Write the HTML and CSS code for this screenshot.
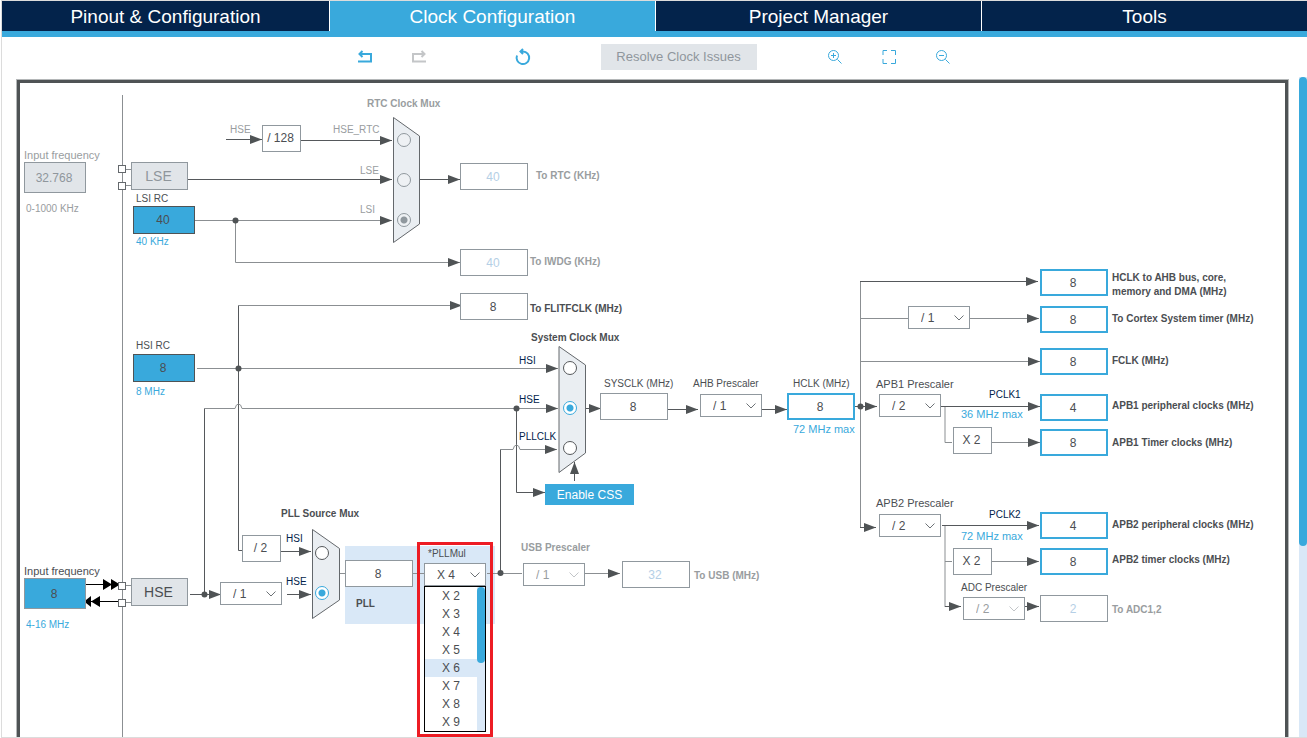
FILE: index.html
```
<!DOCTYPE html>
<html lang="en">
<head>
<meta charset="utf-8">
<title>Clock Configuration</title>
<link rel="stylesheet" href="styles.css">
</head>
<body>
<svg class="defs" aria-hidden="true">
  <symbol id="chevron" viewBox="0 0 10 6"><path d="M.5 .5 5 5 9.5 .5"/></symbol>
</svg>
<div class="app">
  <nav class="tabs" aria-label="Views">
    <a class="tab" href="#pinout">Pinout &amp; Configuration</a>
    <a class="tab tab-active" href="#clock" aria-current="page">Clock Configuration</a>
    <a class="tab" href="#project">Project Manager</a>
    <a class="tab" href="#tools">Tools</a>
  </nav>

  <div class="toolbar">
    <div class="tool-group">
      <button class="tool" type="button" aria-label="Undo"><svg viewBox="0 0 20 20"><path class="bold" d="M4.500 7H16V14M3 14.500H17M7.500 4 4.500 7 7.500 10"/></svg></button>
      <button class="tool tool-off" type="button" aria-label="Redo" disabled><svg viewBox="0 0 20 20"><path class="bold" d="M15.500 7H4V14M3 14.500H17M12.500 4 15.500 7 12.500 10"/></svg></button>
    </div>
    <button class="tool" type="button" aria-label="Reset"><svg viewBox="0 0 20 20"><path class="bold" d="M4 8.500A6.300 6.300 0 1 0 10 4.500H8M10 2 7.500 4.500 10 7"/></svg></button>
    <button class="resolve" type="button" disabled>Resolve Clock Issues</button>
    <div class="tool-group">
      <button class="tool" type="button" aria-label="Zoom in"><svg viewBox="0 0 20 20"><path d="M12.500 12.500 16.500 16.500M6 8.500H11M8.500 6V11"/><circle cx="8.500" cy="8.500" r="5"/></svg></button>
      <button class="tool" type="button" aria-label="Fit"><svg viewBox="0 0 20 20"><path d="M4 8V3.500H8M12 3.500H16.500V8M16.500 12V16.500H12M8 16.500H4V12"/></svg></button>
      <button class="tool" type="button" aria-label="Zoom out"><svg viewBox="0 0 20 20"><path d="M12.500 12.500 16.500 16.500M6 8.500H11"/><circle cx="8.500" cy="8.500" r="5"/></svg></button>
    </div>
  </div>

  <main class="workspace">
    <div class="board">
      <div class="diagram">
        <div class="pll-panel"></div>
        <svg class="wires" width="1265" height="655" viewBox="20 83 1265 655" aria-hidden="true">
          <defs>
            <marker id="arrow" markerUnits="userSpaceOnUse" markerWidth="12" markerHeight="9" refX="12" refY="4.500" orient="auto"><path class="head" d="M0 0 12 4.500 0 9Z"/></marker>
          </defs>
          <g class="wire soft">
            <path d="M122.500 95V738M125 169.500H131M125 185.500H131M125 585.500H131M125 602.500H131"/>
            <path d="M860.500 281V527M945 406V442.500H952M945 525V607M945 561.500H952M860 318.500H908"/>
            <path d="M339 573.500H345M413 573.500H424M487 573.500H522"/>
          </g>
          <g class="wire">
            <path marker-end="url(#arrow)" d="M226 139.500H262"/>
            <path marker-end="url(#arrow)" d="M301 140.500H392"/>
            <path marker-end="url(#arrow)" d="M188 179.500H392"/>
            <path marker-end="url(#arrow)" d="M419 179.500H460"/>
            <path marker-end="url(#arrow)" d="M860 281.500H1038"/>
            <path marker-end="url(#arrow)" d="M941 406.500H1040"/>
            <path marker-end="url(#arrow)" d="M942 525.500H1039"/>
            <path marker-end="url(#arrow)" d="M585 408.500H601"/>
            <path marker-end="url(#arrow)" d="M574.500 481V462"/>
            <path marker-end="url(#arrow)" d="M668 409.500H698"/>
            <path marker-end="url(#arrow)" d="M762 409.500H787"/>
            <path marker-end="url(#arrow)" d="M855 406.500H877"/>
            <path marker-end="url(#arrow)" d="M860 527.500H876"/>
            <path marker-end="url(#arrow)" d="M516.500 408V492.500H545"/>
            <path marker-end="url(#arrow)" d="M281 551.500H311"/>
            <path marker-end="url(#arrow)" d="M287 594.500H311"/>
            <path marker-end="url(#arrow)" d="M190 594.500H221"/>
            <path marker-end="url(#arrow)" d="M1025 606.500H1039"/>
            <path marker-end="url(#arrow)" d="M945 606.500H961"/>
            <path d="M238.500 305V550.500H242M204.500 594V408M500.500 573V449"/>
          </g>
          <g class="wire soft">
            <path marker-end="url(#arrow)" d="M195 220.500H392"/>
            <path marker-end="url(#arrow)" d="M235.500 220V262.500H460"/>
            <path marker-end="url(#arrow)" d="M238 305.500H462"/>
            <path marker-end="url(#arrow)" d="M197 368.500H558"/>
            <path marker-end="url(#arrow)" d="M204 408.500H235Q236 404 238.500 404T242 408.500H558"/>
            <path marker-end="url(#arrow)" d="M500 449.500H513Q514 445 516.500 445T520 449.500H557"/>
            <path marker-end="url(#arrow)" d="M970 318.500H1039"/>
            <path marker-end="url(#arrow)" d="M860 361.500H1040"/>
            <path marker-end="url(#arrow)" d="M992 442.500H1040"/>
            <path marker-end="url(#arrow)" d="M992 561.500H1039"/>
            <path marker-end="url(#arrow)" d="M585 573.500H620"/>
          </g>
          <g class="mux">
            <path d="M393.500 117.500 419.500 136V224L393.500 242.500Z"/>
            <path d="M559 346.500 585.500 365V453L559 472.500Z"/>
            <path d="M312.500 529.500 339.500 548.500V600L312.500 618.500Z"/>
          </g>
          <g class="dot">
            <circle cx="235.500" cy="220.500" r="3"/><circle cx="238.500" cy="368.500" r="3"/><circle cx="516.500" cy="408.500" r="3"/>
            <circle cx="500.500" cy="573" r="3"/><circle cx="860.500" cy="406.500" r="3"/><circle cx="204.500" cy="594.500" r="3"/>
          </g>
          <g class="osc">
            <path d="M86 584.500H119M122 601.500H86"/>
            <path class="osc-head" d="M103 579 112 584.500 103 590ZM111 579 120 584.500 111 590ZM91 596V607L86 603V600ZM100 596 91 601.500 100 607Z"/>
          </g>
          <g class="pin">
            <rect x="118.500" y="165.500" width="7" height="7"/><rect x="118.500" y="182.500" width="7" height="7"/>
            <rect x="118.500" y="582.500" width="7" height="7"/><rect x="118.500" y="599.500" width="7" height="7"/>
          </g>
        </svg>

        <!-- Oscillators -->
        <label class="label wide muted p-lse-freq-label" for="lse-freq">Input frequency</label>
        <input class="field freq off p-lse-freq" id="lse-freq" value="32.768" disabled>
        <span class="label muted p-lse-range">0-1000 KHz</span>
        <button class="osc-button off p-lse" type="button" disabled>LSE</button>
        <label class="label p-lsi-label" for="lsi">LSI RC</label>
        <input class="field source p-lsi" id="lsi" value="40" readonly>
        <span class="label blue p-lsi-unit">40 KHz</span>
        <label class="label p-hsi-label" for="hsi">HSI RC</label>
        <input class="field source p-hsi" id="hsi" value="8" readonly>
        <span class="label blue p-hsi-unit">8 MHz</span>
        <label class="label wide p-hse-freq-label" for="hse-freq">Input frequency</label>
        <input class="field freq p-hse-freq" id="hse-freq" value="8">
        <span class="label blue p-hse-range">4-16 MHz</span>
        <button class="osc-button p-hse" type="button">HSE</button>

        <!-- RTC -->
        <span class="label strong muted p-rtc-title">RTC Clock Mux</span>
        <span class="label muted p-rtc-hse">HSE</span>
        <span class="const p-div128">/ 128</span>
        <label class="label muted p-rtc-in1" for="rtc1">HSE_RTC</label>
        <label class="label muted p-rtc-in2" for="rtc2">LSE</label>
        <label class="label muted p-rtc-in3" for="rtc3">LSI</label>
        <input class="radio p-rtc1" type="radio" name="rtc" id="rtc1" disabled>
        <input class="radio p-rtc2" type="radio" name="rtc" id="rtc2" disabled>
        <input class="radio p-rtc3" type="radio" name="rtc" id="rtc3" checked disabled>
        <input class="field idle p-rtc" id="rtc-out" value="40" disabled>
        <label class="label strong muted p-rtc-label" for="rtc-out">To RTC (KHz)</label>
        <input class="field idle p-iwdg" id="iwdg" value="40" disabled>
        <label class="label strong muted p-iwdg-label" for="iwdg">To IWDG (KHz)</label>
        <input class="field p-flitf" id="flitf" value="8" readonly>
        <label class="label strong p-flitf-label" for="flitf">To FLITFCLK (MHz)</label>

        <!-- System clock -->
        <span class="label strong p-sys-title">System Clock Mux</span>
        <label class="label navy p-sys-in1" for="sys1">HSI</label>
        <label class="label navy p-sys-in2" for="sys2">HSE</label>
        <label class="label navy p-sys-in3" for="sys3">PLLCLK</label>
        <input class="radio p-sys1" type="radio" name="sys" id="sys1">
        <input class="radio p-sys2" type="radio" name="sys" id="sys2" checked>
        <input class="radio p-sys3" type="radio" name="sys" id="sys3">
        <button class="css-button" type="button">Enable CSS</button>
        <label class="label p-sysclk-label" for="sysclk">SYSCLK (MHz)</label>
        <input class="field p-sysclk" id="sysclk" value="8" readonly>
        <label class="label p-ahb-label" for="ahb">AHB Prescaler</label>
        <div class="select p-ahb"><select id="ahb"><option>/ 1</option><option>/ 2</option></select><svg><use href="#chevron"/></svg></div>
        <label class="label p-hclk-label" for="hclk">HCLK (MHz)</label>
        <input class="field key p-hclk" id="hclk" value="8">
        <span class="label wide blue p-hclk-max">72 MHz max</span>

        <!-- AHB outputs -->
        <input class="field key p-out1" id="out1" value="8" readonly>
        <label class="label strong two-line p-out1-label" for="out1">HCLK to AHB bus, core,<br>memory and DMA (MHz)</label>
        <div class="select p-cortex"><select aria-label="Cortex prescaler"><option>/ 1</option><option>/ 8</option></select><svg><use href="#chevron"/></svg></div>
        <input class="field key p-out2" id="out2" value="8" readonly>
        <label class="label strong p-out2-label" for="out2">To Cortex System timer (MHz)</label>
        <input class="field key p-out3" id="out3" value="8" readonly>
        <label class="label strong p-out3-label" for="out3">FCLK (MHz)</label>

        <!-- APB1 -->
        <label class="label wide p-apb1-label" for="apb1">APB1 Prescaler</label>
        <div class="select p-apb1"><select id="apb1"><option>/ 2</option><option>/ 4</option></select><svg><use href="#chevron"/></svg></div>
        <span class="label navy p-pclk1">PCLK1</span>
        <span class="label wide blue p-pclk1-max">36 MHz max</span>
        <span class="const p-mul1">X 2</span>
        <input class="field key p-out4" id="out4" value="4" readonly>
        <label class="label strong p-out4-label" for="out4">APB1 peripheral clocks (MHz)</label>
        <input class="field key p-out5" id="out5" value="8" readonly>
        <label class="label strong p-out5-label" for="out5">APB1 Timer clocks (MHz)</label>

        <!-- APB2 -->
        <label class="label wide p-apb2-label" for="apb2">APB2 Prescaler</label>
        <div class="select p-apb2"><select id="apb2"><option>/ 2</option><option>/ 4</option></select><svg><use href="#chevron"/></svg></div>
        <span class="label navy p-pclk2">PCLK2</span>
        <span class="label wide blue p-pclk2-max">72 MHz max</span>
        <span class="const p-mul2">X 2</span>
        <input class="field key p-out6" id="out6" value="4" readonly>
        <label class="label strong p-out6-label" for="out6">APB2 peripheral clocks (MHz)</label>
        <input class="field key p-out7" id="out7" value="8" readonly>
        <label class="label strong p-out7-label" for="out7">APB2 timer clocks (MHz)</label>
        <label class="label p-adc-label" for="adc">ADC Prescaler</label>
        <div class="select select-off p-adc"><select id="adc" disabled><option>/ 2</option></select><svg><use href="#chevron"/></svg></div>
        <input class="field idle p-out8" id="out8" value="2" disabled>
        <label class="label strong muted p-out8-label" for="out8">To ADC1,2</label>

        <!-- PLL -->
        <span class="label strong p-pll-title">PLL Source Mux</span>
        <span class="const p-div2">/ 2</span>
        <div class="select p-prediv"><select aria-label="HSE divider"><option>/ 1</option><option>/ 2</option></select><svg><use href="#chevron"/></svg></div>
        <label class="label navy p-pll-in1" for="pll1">HSI</label>
        <label class="label navy p-pll-in2" for="pll2">HSE</label>
        <input class="radio p-pll1" type="radio" name="pll" id="pll1">
        <input class="radio p-pll2" type="radio" name="pll" id="pll2" checked>
        <input class="field p-pll" id="pll" value="8" readonly>
        <label class="label strong p-pll-label" for="pll">PLL</label>
        <label class="label p-mul-label" for="mul">*PLLMul</label>
        <div class="select p-mul"><select id="mul"><option>X 4</option></select><svg><use href="#chevron"/></svg></div>
        <div class="menu">
          <ul class="menu-list" role="listbox" aria-label="PLLMul values">
            <li role="option">X 2</li>
            <li role="option">X 3</li>
            <li role="option" aria-selected="true">X 4</li>
            <li role="option">X 5</li>
            <li class="hover" role="option">X 6</li>
            <li role="option">X 7</li>
            <li role="option">X 8</li>
            <li role="option">X 9</li>
          </ul>
          <div class="track"><div class="menu-thumb"></div></div>
        </div>
        <div class="highlight"></div>

        <!-- USB -->
        <label class="label strong muted p-usb-title" for="usb-div">USB Prescaler</label>
        <div class="select select-off p-usb-div"><select id="usb-div" disabled><option>/ 1</option></select><svg><use href="#chevron"/></svg></div>
        <input class="field idle p-usb" id="usb" value="32" disabled>
        <label class="label strong muted p-usb-label" for="usb">To USB (MHz)</label>
      </div>
    </div>
    <div class="track page-track"><div class="page-thumb"></div></div>
  </main>
</div>
</body>
</html>
```
FILE: styles.css
```
:root {
  --blue: #39a9dc;
  --navy: #03234b;
  --ink: #4b4e52;
  --line: #55585b;
  --edge: #90989e;
  --muted: #999da0;
  --pale: #d9e8f7;
  --off: #e1e5e9;
}

* { box-sizing: border-box; }

body {
  margin: 0;
  background: #fff;
  color: var(--ink);
  font: 12px/16px "Liberation Sans", Arial, sans-serif;
}

input, select, button { margin: 0; font: inherit; color: inherit; }

.defs { position: absolute; width: 0; height: 0; }

.app {
  display: flex;
  flex-direction: column;
  height: 100vh;
  margin-left: 1px;
  border: 1px solid #dcdcdc;
  border-right: 0;
  overflow: hidden;
}

/* Tabs */
.tabs {
  display: grid;
  grid-template-columns: 327fr 325fr 325fr 325fr;
  column-gap: 1px;
  border-bottom: 6px solid var(--blue);
  flex: none;
}
.tab {
  height: 30px;
  background: var(--navy);
  color: #fff;
  font-size: 19px;
  line-height: 32px;
  text-align: center;
  text-decoration: none;
}
.tab-active { background: var(--blue); }

/* Toolbar */
.toolbar {
  display: flex;
  flex: none;
  justify-content: center;
  align-items: center;
  gap: 68px;
  height: 40px;
  padding-right: 2px;
}
.tool-group { display: flex; gap: 34px; }
.tool-group:first-child { margin-right: 16px; }
.tool {
  width: 20px;
  height: 20px;
  padding: 0;
  border: 0;
  background: none;
  color: var(--blue);
}
.tool-off { color: #c4c6c8; }
.tool svg { display: block; width: 20px; height: 20px; fill: none; stroke: currentColor; stroke-width: 1; }
.tool .bold { stroke-width: 2; }
.resolve {
  width: 156px;
  height: 26px;
  padding: 0;
  border: 0;
  background: var(--off);
  color: #8f969c;
  font-size: 13px;
}

/* Workspace */
.workspace { display: flex; flex: 1; min-height: 0; }
.board {
  flex: 1;
  min-width: 0;
  margin: 3px 11px 0 15px;
  border: 3px solid #4f5355;
  border-bottom: 0;
  box-shadow: 0 0 0 1px #b4b7b8;
  overflow: auto;
  scrollbar-width: none;
}
.diagram { position: relative; min-width: 1260px; min-height: 655px; }
.track { flex: none; width: 8px; background: var(--pale); }
.page-thumb { height: 71%; border-radius: 4px; background: var(--blue); }

/* Wires */
.wires { display: block; position: absolute; left: 0; top: 0; }
.wire { fill: none; stroke: var(--line); }
.wire.soft { stroke: #8b8f92; }
.head, .dot { fill: #4f5355; stroke: none; }
.mux { fill: #eaeef2; stroke: #64686c; }
.osc { fill: none; stroke: #000; }
.osc-head { fill: #000; stroke: none; }
.pin { fill: #fff; stroke: #64686c; }

/* Diagram nodes */
.label, .field, .select, .const, .radio, .osc-button, .css-button, .pll-panel, .menu, .highlight { position: absolute; }

.label { font-size: 10px; line-height: 12px; white-space: nowrap; }
.wide { font-size: 11px; }
.strong { font-weight: bold; }
.muted { color: var(--muted); }
.blue { color: var(--blue); }
.navy { color: var(--navy); }
.two-line { line-height: 14px; }

.field {
  width: 68px;
  height: 27px;
  padding: 0 2px 0 0;
  border: 1px solid var(--edge);
  border-radius: 0;
  background: #fff;
  text-align: center;
}
.key { border: 2px solid var(--blue); }
.idle { color: #b5cfe6; }
.source { width: 62px; height: 28px; border-color: #4f5355; background: var(--blue); }
.freq { width: 62px; height: 31px; background: var(--blue); }
.off { background: var(--off); color: #8f969c; }

.const {
  width: 39px;
  height: 27px;
  padding-right: 2px;
  border: 1px solid var(--edge);
  background: #fff;
  line-height: 25px;
  text-align: center;
}

.select { width: 62px; height: 23px; background: #fff; }
.select select {
  width: 100%;
  height: 100%;
  padding: 0 0 0 12px;
  border: 1px solid var(--edge);
  border-radius: 0;
  background: none;
  appearance: none;
}
.select svg {
  position: absolute;
  right: 6px;
  top: 9px;
  width: 10px;
  height: 6px;
  fill: none;
  stroke: #6d7276;
  pointer-events: none;
}
.select-off select { color: #999da0; opacity: 1; }
.select-off svg { stroke: #c2c5c8; }

.osc-button {
  width: 57px;
  height: 28px;
  padding: 0 2px 0 0;
  border: 1px solid var(--edge);
  background: var(--off);
  font-size: 14px;
}
.osc-button.off { color: #8f969c; }

.css-button {
  left: 525px;
  top: 401px;
  width: 89px;
  height: 21px;
  padding: 0;
  border: 0;
  background: var(--blue);
  color: #fff;
}

.radio {
  width: 14px;
  height: 14px;
  border: 1px solid var(--line);
  border-radius: 50%;
  background: #fff;
  appearance: none;
}
.radio:checked {
  border-color: var(--blue);
  background: radial-gradient(circle, var(--blue) 3px, #fff 4px);
}
.radio:disabled { border-color: var(--edge); background: #eef1f4; }
.radio:disabled:checked { background: radial-gradient(circle, var(--edge) 3px, #eef1f4 4px); }

.pll-panel { left: 325px; top: 463px; width: 150px; height: 78px; background: var(--pale); }
.highlight { left: 397px; top: 459px; width: 76px; height: 195px; border: 3px solid #ed1c24; pointer-events: none; }

.menu {
  display: flex;
  left: 404px;
  top: 503px;
  width: 62px;
  height: 146px;
  border: 1px solid #000;
  background: #fff;
}
.menu-list { flex: 1; margin: 0; padding: 0; list-style: none; text-align: center; line-height: 18px; }
.hover { background: var(--pale); }
.menu-thumb { height: 76px; border-radius: 4px; background: var(--blue); }

/* Node positions */
.p-lse-freq-label { left: 4px; top: 66px; }
.p-lse-freq { left: 4px; top: 79px; }
.p-lse-range { left: 6px; top: 120px; }
.p-lse { left: 111px; top: 79px; }
.p-lsi-label { left: 116px; top: 110px; }
.p-lsi { left: 113px; top: 123px; }
.p-lsi-unit { left: 116px; top: 153px; }
.p-hsi-label { left: 116px; top: 257px; }
.p-hsi { left: 113px; top: 271px; }
.p-hsi-unit { left: 116px; top: 303px; }
.p-hse-freq-label { left: 4px; top: 482px; }
.p-hse-freq { left: 4px; top: 495px; }
.p-hse-range { left: 6px; top: 536px; }
.p-hse { left: 111px; top: 495px; }

.p-rtc-title { left: 347px; top: 15px; }
.p-rtc-hse { left: 210px; top: 41px; }
.p-div128 { left: 242px; top: 42px; }
.p-rtc-in1 { left: 313px; top: 41px; }
.p-rtc-in2 { left: 340px; top: 82px; }
.p-rtc-in3 { left: 340px; top: 121px; }
.p-rtc1 { left: 377px; top: 50px; }
.p-rtc2 { left: 377px; top: 90px; }
.p-rtc3 { left: 377px; top: 130px; }
.p-rtc { left: 440px; top: 80px; }
.p-rtc-label { left: 516px; top: 87px; }
.p-iwdg { left: 440px; top: 166px; }
.p-iwdg-label { left: 510px; top: 173px; }
.p-flitf { left: 440px; top: 210px; }
.p-flitf-label { left: 510px; top: 220px; }

.p-sys-title { left: 511px; top: 249px; }
.p-sys-in1 { left: 499px; top: 272px; }
.p-sys-in2 { left: 499px; top: 311px; }
.p-sys-in3 { left: 499px; top: 348px; }
.p-sys1 { left: 543px; top: 278px; }
.p-sys2 { left: 543px; top: 318px; }
.p-sys3 { left: 543px; top: 358px; }
.p-sysclk-label { left: 584px; top: 295px; }
.p-sysclk { left: 580px; top: 310px; }
.p-ahb-label { left: 673px; top: 295px; }
.p-ahb { left: 680px; top: 311px; }
.p-hclk-label { left: 773px; top: 295px; }
.p-hclk { left: 767px; top: 310px; }
.p-hclk-max { left: 773px; top: 340px; }

.p-cortex { left: 888px; top: 223px; }
.p-out1 { left: 1020px; top: 186px; }
.p-out2 { left: 1020px; top: 223px; }
.p-out3 { left: 1020px; top: 265px; }
.p-out4 { left: 1020px; top: 311px; }
.p-out5 { left: 1020px; top: 346px; }
.p-out6 { left: 1020px; top: 429px; }
.p-out7 { left: 1020px; top: 465px; }
.p-out8 { left: 1020px; top: 512px; }
.p-out1-label { left: 1092px; top: 188px; }
.p-out2-label { left: 1092px; top: 230px; }
.p-out3-label { left: 1092px; top: 272px; }
.p-out4-label { left: 1092px; top: 317px; }
.p-out5-label { left: 1092px; top: 354px; }
.p-out6-label { left: 1092px; top: 436px; }
.p-out7-label { left: 1092px; top: 471px; }
.p-out8-label { left: 1092px; top: 521px; }

.p-apb1-label { left: 856px; top: 295px; }
.p-apb1 { left: 859px; top: 311px; }
.p-pclk1 { left: 969px; top: 306px; }
.p-pclk1-max { left: 941px; top: 325px; }
.p-mul1 { left: 933px; top: 344px; }
.p-apb2-label { left: 856px; top: 414px; }
.p-apb2 { left: 859px; top: 431px; }
.p-pclk2 { left: 969px; top: 426px; }
.p-pclk2-max { left: 941px; top: 447px; }
.p-mul2 { left: 933px; top: 465px; }
.p-adc-label { left: 941px; top: 499px; }
.p-adc { left: 943px; top: 514px; }

.p-pll-title { left: 261px; top: 425px; }
.p-div2 { left: 222px; top: 452px; }
.p-prediv { left: 200px; top: 499px; }
.p-pll-in1 { left: 266px; top: 450px; }
.p-pll-in2 { left: 266px; top: 493px; }
.p-pll1 { left: 295px; top: 463px; }
.p-pll2 { left: 295px; top: 503px; }
.p-pll { left: 325px; top: 477px; }
.p-pll-label { left: 336px; top: 515px; }
.p-mul-label { left: 408px; top: 465px; }
.p-mul { left: 404px; top: 480px; }

.p-usb-title { left: 501px; top: 459px; }
.p-usb-div { left: 503px; top: 480px; }
.p-usb { left: 602px; top: 478px; }
.p-usb-label { left: 674px; top: 487px; }
```
